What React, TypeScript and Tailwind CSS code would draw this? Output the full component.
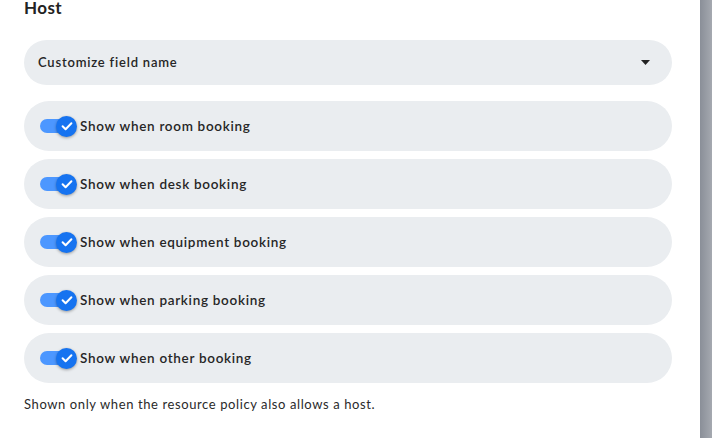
const bookingKinds = ["room", "desk", "equipment", "parking", "other"];

function Toggle() {
  return (
    <div className="relative w-[37px] h-[21px] shrink-0">
      <div className="absolute left-0 top-[3.5px] w-[30px] h-[14px] rounded-full bg-[#4c97ff]" />
      <div className="absolute right-0 top-0 w-[21px] h-[21px] rounded-full bg-[#1673f0] shadow-[0_1px_3px_rgba(0,0,0,0.35)] flex items-center justify-center">
        <svg width="14" height="14" viewBox="0 0 14 14" fill="none">
          <path d="M2.6 7.3l3 3 5.8-6.1" stroke="white" strokeWidth="2" strokeLinecap="round" strokeLinejoin="round" />
        </svg>
      </div>
    </div>
  );
}

export default function App() {
  return (
    <div className="flex w-[712px] h-[438px] bg-white font-['Lato',sans-serif] text-[#262626] overflow-hidden">
      <div className="w-[700px] pl-6 pr-7">
        <h3 className="text-[17px] leading-[16px] font-bold text-[#222] tracking-[0.4px]">Host</h3>

        <div className="mt-[24px] h-[45px] rounded-full bg-[#eaedf0] flex items-center justify-between pl-[14px] pr-[22px]">
          <span className="text-[13px] font-semibold tracking-[0.8px]">Customize field name</span>
          <svg width="9" height="5" viewBox="0 0 9 5">
            <path d="M0 0h9L4.5 5z" fill="#222" />
          </svg>
        </div>

        <div className="mt-4 flex flex-col gap-2">
          {bookingKinds.map((kind) => (
            <div key={kind} className="h-[50px] rounded-full bg-[#eaedf0] flex items-center gap-[3px] pl-4">
              <Toggle />
              <span className="text-[13.5px] font-semibold tracking-[0.7px]">Show when {kind} booking</span>
            </div>
          ))}
        </div>

        <p className="mt-[12px] text-[13px] text-[#2a2a2a] tracking-[0.6px]">Shown only when the resource policy also allows a host.</p>
      </div>
      <div className="flex-1 bg-gradient-to-r from-[#8a8f98] to-[#a5a9b0]" />
    </div>
  );
}
